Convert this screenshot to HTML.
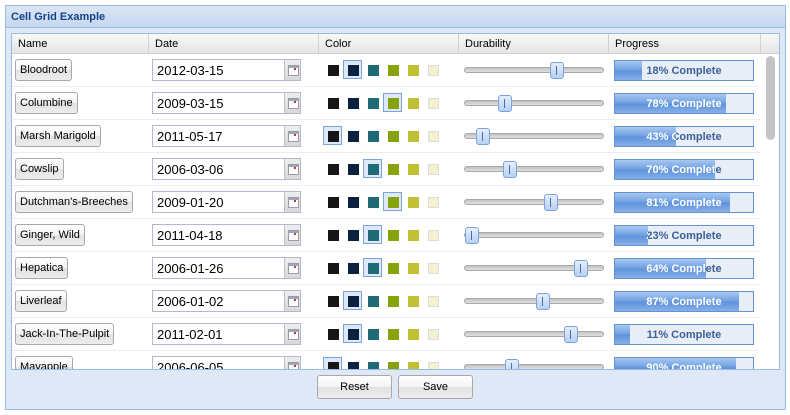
<!DOCTYPE html>
<html><head><meta charset="utf-8"><style>
*{box-sizing:border-box;margin:0;padding:0}
body{width:790px;height:415px;background:#fff;font-family:"Liberation Sans",Arial,sans-serif;font-size:12px;position:relative;overflow:hidden}
.panel{position:absolute;left:5px;top:5px;width:781px;height:405px;border:1px solid #99bbe8;background:#dfe8f6}
.hd{position:absolute;left:0;top:0;right:0;height:22px;background:linear-gradient(#dae6f4,#c6d7ef);border-bottom:1px solid #99bbe8;color:#15428b;font-weight:bold;font-size:11px;padding:5px 0 0 5px}
.grid{position:absolute;left:11px;top:33px;width:769px;height:337px;border:1px solid #99bbe8;background:#fff;overflow:hidden}
.gh{position:absolute;left:0;top:0;height:20px;width:100%;background:linear-gradient(#f9f9f9,#e3e4e6);border-bottom:1px solid #d0d0d0}
.gh div{position:absolute;top:0;height:20px;border-right:1px solid #d0d0d0;padding:4px 0 0 6px;font-size:11px;color:#000}
.row{position:absolute;left:0;width:748px;height:33px;border-bottom:1px solid #ededed}
.nb{position:absolute;left:3px;top:5px;height:22px;border:1px solid #a8a8a8;border-radius:3px;background:linear-gradient(#fff 0,#f3f3f3 50%,#e2e2e2 51%,#ececec);font-size:11px;padding:4px 4px 0 4px;white-space:nowrap}
.df{position:absolute;left:140px;top:5px;width:149px;height:22px;border:1px solid #b5b8c8;background:#fff;font-size:13px;padding:3px 0 0 4px}
.df i{position:absolute;right:0;top:0;width:16px;height:20px;background:linear-gradient(#eee,#d8d8d8);border-left:1px solid #c0c0c0}
.df i:after{content:"";position:absolute;left:3px;top:5px;width:9px;height:9px;border:1px solid #99a;background:#fff;box-shadow:inset 0 2px 0 #9ab}
.df i:before{content:"";position:absolute;left:9px;top:8px;width:2px;height:2px;background:#c33;z-index:1}
.sw{position:absolute;top:11px;width:11px;height:11px}
.sel{position:absolute;top:6px;width:19px;height:19px;border:1px solid #7aa3e0;background:#dde8f8}
.tr{position:absolute;left:452px;top:13px;width:140px;height:6px;border-radius:3px;background:linear-gradient(#c2c2c2,#e0e0e0);border:1px solid #a8a8a8}
.th{position:absolute;top:8px;width:14px;height:17px;border:1px solid #7aa3e0;border-radius:3px;background:linear-gradient(#e4eefc,#b8d0f2)}
.th:after{content:"";position:absolute;left:5px;top:3px;width:1px;height:9px;background:#4a6fa5}
.pb{position:absolute;left:602px;top:6px;width:140px;height:21px;border:1px solid #6593cf;background:#e8eef8;overflow:hidden}
.pb .f{position:absolute;left:0;top:0;height:100%;background:linear-gradient(#a8c8f2,#6c9ee0 50%,#5e92db 51%,#86b0e8);overflow:hidden}
.pb span{position:absolute;left:0;top:4px;width:138px;text-align:center;font-weight:bold;font-size:11px;color:#3c5f97}
.pb .f span{color:#fff}
.sb{position:absolute;left:754px;top:22px;width:9px;height:84px;border-radius:5px;background:#c4c4c4}
.btn{position:absolute;top:369px;width:75px;height:24px;border:1px solid #a8a8a8;border-radius:3px;background:linear-gradient(#fff 0,#f3f3f3 50%,#e2e2e2 51%,#ececec);font-size:11px;text-align:center;padding-top:5px}
</style></head><body>
<div class="panel">
<div class="hd">Cell Grid Example</div>
<div class="btn" style="left:311px">Reset</div>
<div class="btn" style="left:392px">Save</div>
</div>
<div class="grid">
<div class="gh"><div style="left:0;width:137px">Name</div><div style="left:137px;width:170px">Date</div><div style="left:307px;width:140px">Color</div><div style="left:447px;width:150px">Durability</div><div style="left:597px;width:152px">Progress</div></div>
<div class="sb"></div>

<div class="row" style="top:20px"><div class="nb">Bloodroot</div><div class="df">2012-03-15<i></i></div>
<div class="sel" style="left:331px"></div><div class="sw" style="left:316px;background:#161616"></div><div class="sw" style="left:336px;background:#0a2240"></div><div class="sw" style="left:356px;background:#1f6a75"></div><div class="sw" style="left:376px;background:#86a30c"></div><div class="sw" style="left:396px;background:#bfc033"></div><div class="sw" style="left:416px;background:#f3f1cf;border:1px solid #ddd"></div>
<div class="tr"></div><div class="th" style="left:538px"></div>
<div class="pb"><span>18% Complete</span><div class="f" style="width:27px"><span>18% Complete</span></div></div></div>

<div class="row" style="top:53px"><div class="nb">Columbine</div><div class="df">2009-03-15<i></i></div>
<div class="sel" style="left:371px"></div><div class="sw" style="left:316px;background:#161616"></div><div class="sw" style="left:336px;background:#0a2240"></div><div class="sw" style="left:356px;background:#1f6a75"></div><div class="sw" style="left:376px;background:#86a30c"></div><div class="sw" style="left:396px;background:#bfc033"></div><div class="sw" style="left:416px;background:#f3f1cf;border:1px solid #ddd"></div>
<div class="tr"></div><div class="th" style="left:486px"></div>
<div class="pb"><span>78% Complete</span><div class="f" style="width:111px"><span>78% Complete</span></div></div></div>

<div class="row" style="top:86px"><div class="nb">Marsh Marigold</div><div class="df">2011-05-17<i></i></div>
<div class="sel" style="left:311px"></div><div class="sw" style="left:316px;background:#161616"></div><div class="sw" style="left:336px;background:#0a2240"></div><div class="sw" style="left:356px;background:#1f6a75"></div><div class="sw" style="left:376px;background:#86a30c"></div><div class="sw" style="left:396px;background:#bfc033"></div><div class="sw" style="left:416px;background:#f3f1cf;border:1px solid #ddd"></div>
<div class="tr"></div><div class="th" style="left:464px"></div>
<div class="pb"><span>43% Complete</span><div class="f" style="width:61px"><span>43% Complete</span></div></div></div>

<div class="row" style="top:119px"><div class="nb">Cowslip</div><div class="df">2006-03-06<i></i></div>
<div class="sel" style="left:351px"></div><div class="sw" style="left:316px;background:#161616"></div><div class="sw" style="left:336px;background:#0a2240"></div><div class="sw" style="left:356px;background:#1f6a75"></div><div class="sw" style="left:376px;background:#86a30c"></div><div class="sw" style="left:396px;background:#bfc033"></div><div class="sw" style="left:416px;background:#f3f1cf;border:1px solid #ddd"></div>
<div class="tr"></div><div class="th" style="left:491px"></div>
<div class="pb"><span>70% Complete</span><div class="f" style="width:100px"><span>70% Complete</span></div></div></div>

<div class="row" style="top:152px"><div class="nb">Dutchman's-Breeches</div><div class="df">2009-01-20<i></i></div>
<div class="sel" style="left:371px"></div><div class="sw" style="left:316px;background:#161616"></div><div class="sw" style="left:336px;background:#0a2240"></div><div class="sw" style="left:356px;background:#1f6a75"></div><div class="sw" style="left:376px;background:#86a30c"></div><div class="sw" style="left:396px;background:#bfc033"></div><div class="sw" style="left:416px;background:#f3f1cf;border:1px solid #ddd"></div>
<div class="tr"></div><div class="th" style="left:532px"></div>
<div class="pb"><span>81% Complete</span><div class="f" style="width:115px"><span>81% Complete</span></div></div></div>

<div class="row" style="top:185px"><div class="nb">Ginger, Wild</div><div class="df">2011-04-18<i></i></div>
<div class="sel" style="left:351px"></div><div class="sw" style="left:316px;background:#161616"></div><div class="sw" style="left:336px;background:#0a2240"></div><div class="sw" style="left:356px;background:#1f6a75"></div><div class="sw" style="left:376px;background:#86a30c"></div><div class="sw" style="left:396px;background:#bfc033"></div><div class="sw" style="left:416px;background:#f3f1cf;border:1px solid #ddd"></div>
<div class="tr"></div><div class="th" style="left:453px"></div>
<div class="pb"><span>23% Complete</span><div class="f" style="width:33px"><span>23% Complete</span></div></div></div>

<div class="row" style="top:218px"><div class="nb">Hepatica</div><div class="df">2006-01-26<i></i></div>
<div class="sel" style="left:351px"></div><div class="sw" style="left:316px;background:#161616"></div><div class="sw" style="left:336px;background:#0a2240"></div><div class="sw" style="left:356px;background:#1f6a75"></div><div class="sw" style="left:376px;background:#86a30c"></div><div class="sw" style="left:396px;background:#bfc033"></div><div class="sw" style="left:416px;background:#f3f1cf;border:1px solid #ddd"></div>
<div class="tr"></div><div class="th" style="left:562px"></div>
<div class="pb"><span>64% Complete</span><div class="f" style="width:91px"><span>64% Complete</span></div></div></div>

<div class="row" style="top:251px"><div class="nb">Liverleaf</div><div class="df">2006-01-02<i></i></div>
<div class="sel" style="left:331px"></div><div class="sw" style="left:316px;background:#161616"></div><div class="sw" style="left:336px;background:#0a2240"></div><div class="sw" style="left:356px;background:#1f6a75"></div><div class="sw" style="left:376px;background:#86a30c"></div><div class="sw" style="left:396px;background:#bfc033"></div><div class="sw" style="left:416px;background:#f3f1cf;border:1px solid #ddd"></div>
<div class="tr"></div><div class="th" style="left:524px"></div>
<div class="pb"><span>87% Complete</span><div class="f" style="width:124px"><span>87% Complete</span></div></div></div>

<div class="row" style="top:284px"><div class="nb">Jack-In-The-Pulpit</div><div class="df">2011-02-01<i></i></div>
<div class="sel" style="left:331px"></div><div class="sw" style="left:316px;background:#161616"></div><div class="sw" style="left:336px;background:#0a2240"></div><div class="sw" style="left:356px;background:#1f6a75"></div><div class="sw" style="left:376px;background:#86a30c"></div><div class="sw" style="left:396px;background:#bfc033"></div><div class="sw" style="left:416px;background:#f3f1cf;border:1px solid #ddd"></div>
<div class="tr"></div><div class="th" style="left:552px"></div>
<div class="pb"><span>11% Complete</span><div class="f" style="width:15px"><span>11% Complete</span></div></div></div>

<div class="row" style="top:317px"><div class="nb">Mayapple</div><div class="df">2006-06-05<i></i></div>
<div class="sel" style="left:311px"></div><div class="sw" style="left:316px;background:#161616"></div><div class="sw" style="left:336px;background:#0a2240"></div><div class="sw" style="left:356px;background:#1f6a75"></div><div class="sw" style="left:376px;background:#86a30c"></div><div class="sw" style="left:396px;background:#bfc033"></div><div class="sw" style="left:416px;background:#f3f1cf;border:1px solid #ddd"></div>
<div class="tr"></div><div class="th" style="left:493px"></div>
<div class="pb"><span>90% Complete</span><div class="f" style="width:121px"><span>90% Complete</span></div></div></div>
</div>
</body></html>
